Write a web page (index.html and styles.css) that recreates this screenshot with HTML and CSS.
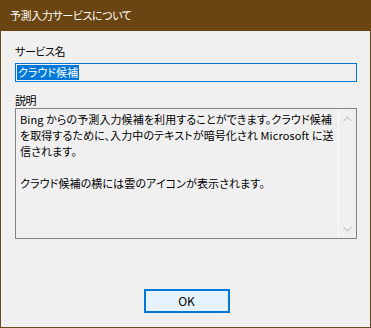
FILE: index.html
```html
<!DOCTYPE html>
<html lang="ja">
<head>
<meta charset="utf-8">
<link rel="stylesheet" href="styles.css">
</head>
<body>
<div class="window">
  <div class="titlebar">予測入力サービスについて</div>
  <div class="content">
    <div class="label">サービス名</div>
    <div class="input"><span class="sel">クラウド候補</span></div>
    <div class="label label2">説明</div>
    <div class="textarea">
      <div class="text">
        <div class="line">Bing からの予測入力候補を利用することができます。クラウド候補</div>
        <div class="line">を取得するために、入力中のテキストが暗号化され Microsoft に送</div>
        <div class="line">信されます。</div>
        <div class="line">&nbsp;</div>
        <div class="line">クラウド候補の横には雲のアイコンが表示されます。</div>
      </div>
      <div class="scrollbar">
        <svg class="chev" width="9" height="6" viewBox="0 0 9 6"><polyline points="0.5,5 4.5,1 8.5,5" fill="none" stroke="#c8c8c8" stroke-width="1.1"/></svg>
        <svg class="chev" width="9" height="6" viewBox="0 0 9 6"><polyline points="0.5,1 4.5,5 8.5,1" fill="none" stroke="#c8c8c8" stroke-width="1.1"/></svg>
      </div>
    </div>
    <div class="buttons">
      <div class="btn">OK</div>
    </div>
  </div>
</div>
</body>
</html>
```
FILE: styles.css
```css
html, body {
  margin: 0;
  padding: 0;
  width: 371px;
  height: 328px;
  overflow: hidden;
  background: #f0f0f0;
}
.window {
  box-sizing: border-box;
  width: 371px;
  height: 328px;
  border: 1px solid #6b4a1f;
  border-top: none;
  display: flex;
  flex-direction: column;
  font-family: "Noto Sans CJK JP", sans-serif;
  font-feature-settings: "palt";
  font-size: 11px;
  color: #000;
}
.titlebar {
  height: 31px;
  margin: 0 -1px;
  padding-left: 10px;
  background: #6b4511;
  color: #fff;
  line-height: 30px;
  font-size: 11px;
  letter-spacing: -0.4px;
}
.content {
  flex: 1;
  display: flex;
  flex-direction: column;
  padding: 12px 13px 0 14px;
  background: #f0f0f0;
}
.label {
  line-height: 16px;
  height: 16px;
  letter-spacing: -0.4px;
}
.input {
  box-sizing: border-box;
  margin-top: 4px;
  height: 19px;
  border: 1px solid #0078d7;
  padding: 1px 1px;
  line-height: 15px;
  display: flex;
}
.sel {
  background: #0078d7;
  color: #fff;
  padding: 0 1px;
  line-height: 15px;
}
.label2 {
  margin-top: 10px;
}
.textarea {
  box-sizing: border-box;
  height: 131px;
  border: 1px solid #828282;
  display: flex;
}
.text {
  flex: 1;
  padding: 2px 0 0 4px;
  line-height: 16px;
  letter-spacing: 0.1px;
  white-space: nowrap;
  overflow: hidden;
}
.scrollbar {
  width: 17px;
  border-left: 1px solid #fafafa;
  display: flex;
  flex-direction: column;
  justify-content: space-between;
  align-items: center;
  padding: 7px 0 6px;
}
.chev {
  display: block;
}
.buttons {
  display: flex;
  justify-content: center;
  margin-top: 50px;
  padding-left: 1px;
}
.btn {
  box-sizing: border-box;
  width: 86px;
  height: 24px;
  border: 2px solid #0078d7;
  background: #e5f1fb;
  text-align: center;
  line-height: 20px;
  font-size: 12px;
}
```
